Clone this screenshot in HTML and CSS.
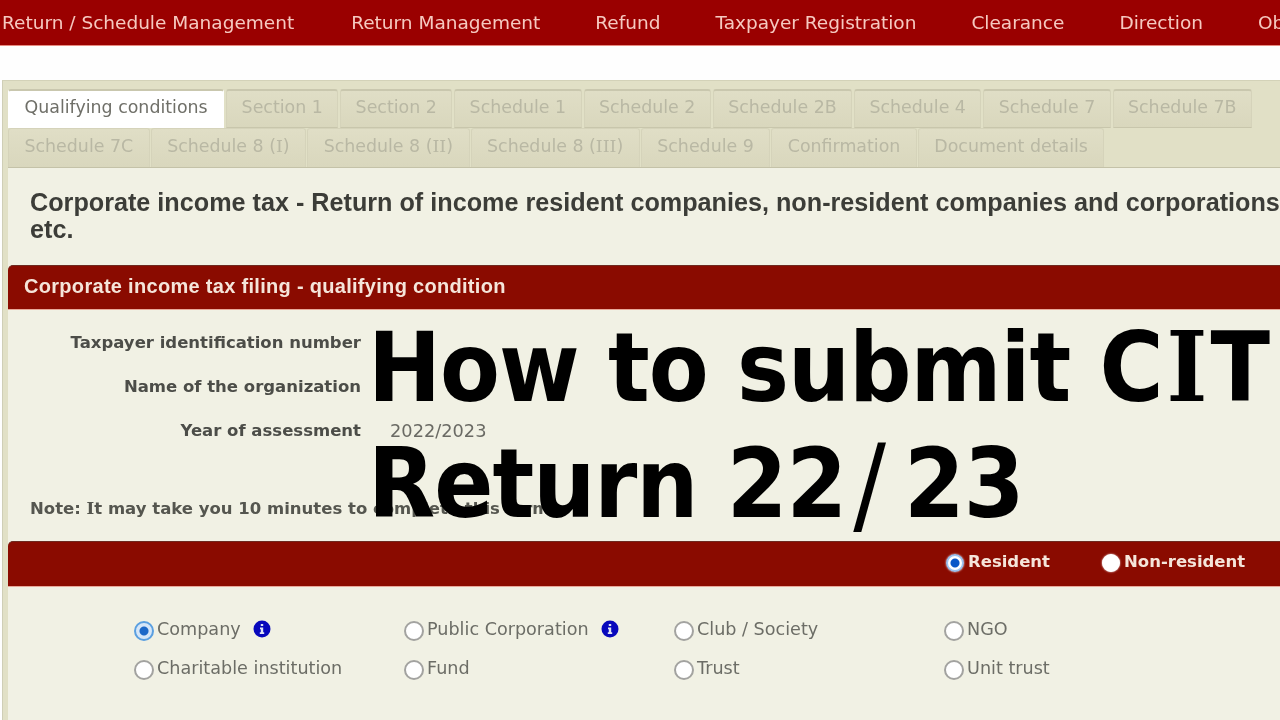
FILE: index.html
```html
<!DOCTYPE html>
<html lang="en">
<head>
<meta charset="utf-8">
<title>How to submit CIT Return 22/23</title>
<link rel="stylesheet" href="styles.css">
</head>
<body>
<div class="page">
  <nav class="nav">
    <a>Return / Schedule Management</a>
    <a>Return Management</a>
    <a>Refund</a>
    <a>Taxpayer Registration</a>
    <a>Clearance</a>
    <a>Direction</a>
    <a>Objection</a>
  </nav>
  <div class="panel">
    <div class="tabs">
      <div class="tab-row">
        <a class="tab active">Qualifying conditions</a>
        <a class="tab">Section 1</a>
        <a class="tab">Section 2</a>
        <a class="tab">Schedule 1</a>
        <a class="tab">Schedule 2</a>
        <a class="tab">Schedule 2B</a>
        <a class="tab">Schedule 4</a>
        <a class="tab">Schedule 7</a>
        <a class="tab">Schedule 7B</a>
      </div>
      <div class="tab-row tab-row-low">
        <a class="tab">Schedule 7C</a>
        <a class="tab">Schedule 8 (<span class="serif">I</span>)</a>
        <a class="tab">Schedule 8 (<span class="serif">II</span>)</a>
        <a class="tab">Schedule 8 (<span class="serif">III</span>)</a>
        <a class="tab">Schedule 9</a>
        <a class="tab">Confirmation</a>
        <a class="tab">Document details</a>
      </div>
    </div>
    <main class="content">
      <h1 class="title">Corporate income tax - Return of income resident companies, non-resident companies and corporations, etc.</h1>
      <h2 class="bar bar-head">Corporate income tax filing - qualifying condition</h2>
      <div class="fields">
        <div class="field"><span class="label">Taxpayer identification number</span></div>
        <div class="field"><span class="label">Name of the organization</span></div>
        <div class="field"><span class="label">Year of assessment</span><span class="value">2022/2023</span></div>
      </div>
      <p class="note">Note: <span class="serif">I</span>t may take you 10 minutes to complete this form</p>
      <div class="bar bar-choice">
        <label class="choice"><input class="radio radio-dark" type="radio" name="res" checked>Resident</label>
        <label class="choice"><input class="radio radio-dark" type="radio" name="res">Non-resident</label>
      </div>
      <div class="options">
        <label class="opt"><input class="radio" type="radio" name="kind" checked>Company<svg class="info" viewBox="0 0 18 18"><circle cx="9" cy="9" r="8.5" fill="#0808bc"/><path d="M7.8 4h2.4v2H7.8zM7 7.4h3.2v4.8h1v1.8H6.8v-1.8h1V9.2H7z" fill="#dfe4f5"/></svg></label>
        <label class="opt"><input class="radio" type="radio" name="kind">Public Corporation<svg class="info" viewBox="0 0 18 18"><circle cx="9" cy="9" r="8.5" fill="#0808bc"/><path d="M7.8 4h2.4v2H7.8zM7 7.4h3.2v4.8h1v1.8H6.8v-1.8h1V9.2H7z" fill="#dfe4f5"/></svg></label>
        <label class="opt"><input class="radio" type="radio" name="kind">Club / Society</label>
        <label class="opt"><input class="radio" type="radio" name="kind">NGO</label>
        <label class="opt"><input class="radio" type="radio" name="kind">Charitable institution</label>
        <label class="opt"><input class="radio" type="radio" name="kind">Fund</label>
        <label class="opt"><input class="radio" type="radio" name="kind">Trust</label>
        <label class="opt"><input class="radio" type="radio" name="kind">Unit trust</label>
      </div>
    </main>
  </div>
</div>
<div class="headline">How to submit C<span class="serif cit-i">I</span>T<br>Return 22<span class="slash">/</span>23</div>
</body>
</html>
```
FILE: styles.css
```css
html, body {
  margin: 0;
  height: 720px;
  overflow: hidden;
  background: #fefefe;
}
body {
  position: relative;
  font-family: "DejaVu Sans", sans-serif;
}
.page {
  width: 1320px;
  filter: blur(0.45px);
}
.serif {
  font-family: "DejaVu Serif", serif;
}
.nav {
  display: flex;
  gap: 55px;
  height: 46px;
  padding-left: 2px;
  align-items: center;
  box-sizing: border-box;
  background: #9a0000;
  border-bottom: 1px solid #e88a80;
  color: #f6c9c0;
  font-size: 18.5px;
  white-space: nowrap;
}
.nav a:first-child {
  margin-right: 2px;
}
.panel {
  margin: 34px 0 0 2px;
  padding: 8px 0 0 5px;
  background: #e1e0c6;
  border-top: 1px solid #d3d2b8;
  border-left: 1px solid #cfceb6;
}
.tab-row {
  display: flex;
  height: 39px;
  gap: 2px;
}
.tab {
  display: flex;
  align-items: center;
  padding: 0 14.4px 5px;
  box-sizing: border-box;
  background: linear-gradient(#e0dec6, #d9d7bd);
  border: 1px solid #d5d3ba;
  border-top: 2px solid #c9c7ae;
  border-bottom: 1px solid #c8c6ac;
  border-radius: 3px 3px 0 0;
  color: #b9b8a4;
  font-size: 17.4px;
  white-space: nowrap;
}
.tab.active {
  padding: 0 15.6px 5px;
  background: #fff;
  border-color: #fff;
  border-top-color: #c9c7ae;
  color: #6f6f68;
}
.tab-row-low {
  gap: 1px;
  border-bottom: 1px solid #c4c2a8;
}
.tab-row-low .tab {
  padding: 0 15.5px 5px;
  border-top: 1px solid #d5d3ba;
  border-bottom: 0;
}
.content {
  background: #f1f1e4;
  height: 600px;
  overflow: hidden;
}
.title {
  margin: 21px 0 0 22px;
  font: bold 25.2px/27px "Liberation Sans", sans-serif;
  color: #3c3d38;
}
.bar {
  box-sizing: border-box;
  margin: 0;
  background: #8a0b00;
  border-top: 1px solid #6d2a20;
  border-bottom: 1px solid #e9a99a;
  border-radius: 5px 0 0 0;
  color: #f5e5da;
}
.bar-head {
  display: flex;
  align-items: center;
  height: 45px;
  margin-top: 22px;
  padding: 0 0 2px 16px;
  font: bold 20px "Liberation Sans", sans-serif;
  letter-spacing: 0.3px;
}
.fields {
  display: flex;
  flex-direction: column;
  padding-top: 10px;
}
.field {
  display: flex;
  align-items: center;
  height: 44px;
  color: #4c4d48;
  font-size: 16.5px;
}
.label {
  width: 353px;
  text-align: right;
  font-weight: bold;
  white-space: nowrap;
}
.value {
  margin-left: 29px;
  color: #6a6a64;
  font-size: 17.8px;
}
.note {
  margin: 47px 0 0 22px;
  height: 24px;
  font-size: 16.5px;
  font-weight: bold;
  color: #55564f;
}
.bar-choice {
  display: flex;
  align-items: center;
  height: 46px;
  margin-top: 18px;
  padding: 0 0 6px 938px;
  gap: 52px;
  font-size: 16.5px;
  font-weight: bold;
}
.choice {
  display: flex;
  align-items: center;
  gap: 3px;
}
.radio {
  appearance: none;
  flex: none;
  box-sizing: border-box;
  width: 20px;
  height: 20px;
  margin: 4px 3px 0 0;
  border: 2px solid #a3a3a0;
  border-radius: 50%;
  background: #fff;
}
.radio:checked {
  border: 2px solid #5a9fe0;
  background: radial-gradient(circle, #1c68c8 0 4px, #d5e6f8 5px);
}
.radio-dark {
  width: 18px;
  height: 18px;
  margin-right: 1px;
  border-color: #fff;
  box-shadow: 0 0 2px #fff;
}
.radio-dark:checked {
  border-color: #9cc3f0;
  background: radial-gradient(circle, #0a58c8 0 4px, #fff 5px);
}
.options {
  display: grid;
  grid-template-columns: repeat(4, 270px);
  grid-auto-rows: 39px;
  padding: 22px 0 0 126px;
}
.opt {
  display: flex;
  align-items: center;
  color: #6c6d66;
  font-size: 17.6px;
  white-space: nowrap;
}
.info {
  width: 18px;
  height: 18px;
  margin-left: 12px;
}
.headline {
  position: absolute;
  left: 368px;
  top: 309px;
  font: bold 97px/116px "DejaVu Sans", sans-serif;
  font-stretch: condensed;
  letter-spacing: -1px;
  color: #000;
  white-space: nowrap;
}
.cit-i {
  margin: 0 4px;
}
.slash {
  margin: 0 19px 0 7px;
  font-size: 108px;
  line-height: 1px;
  font-weight: normal;
  vertical-align: -5px;
}
```
